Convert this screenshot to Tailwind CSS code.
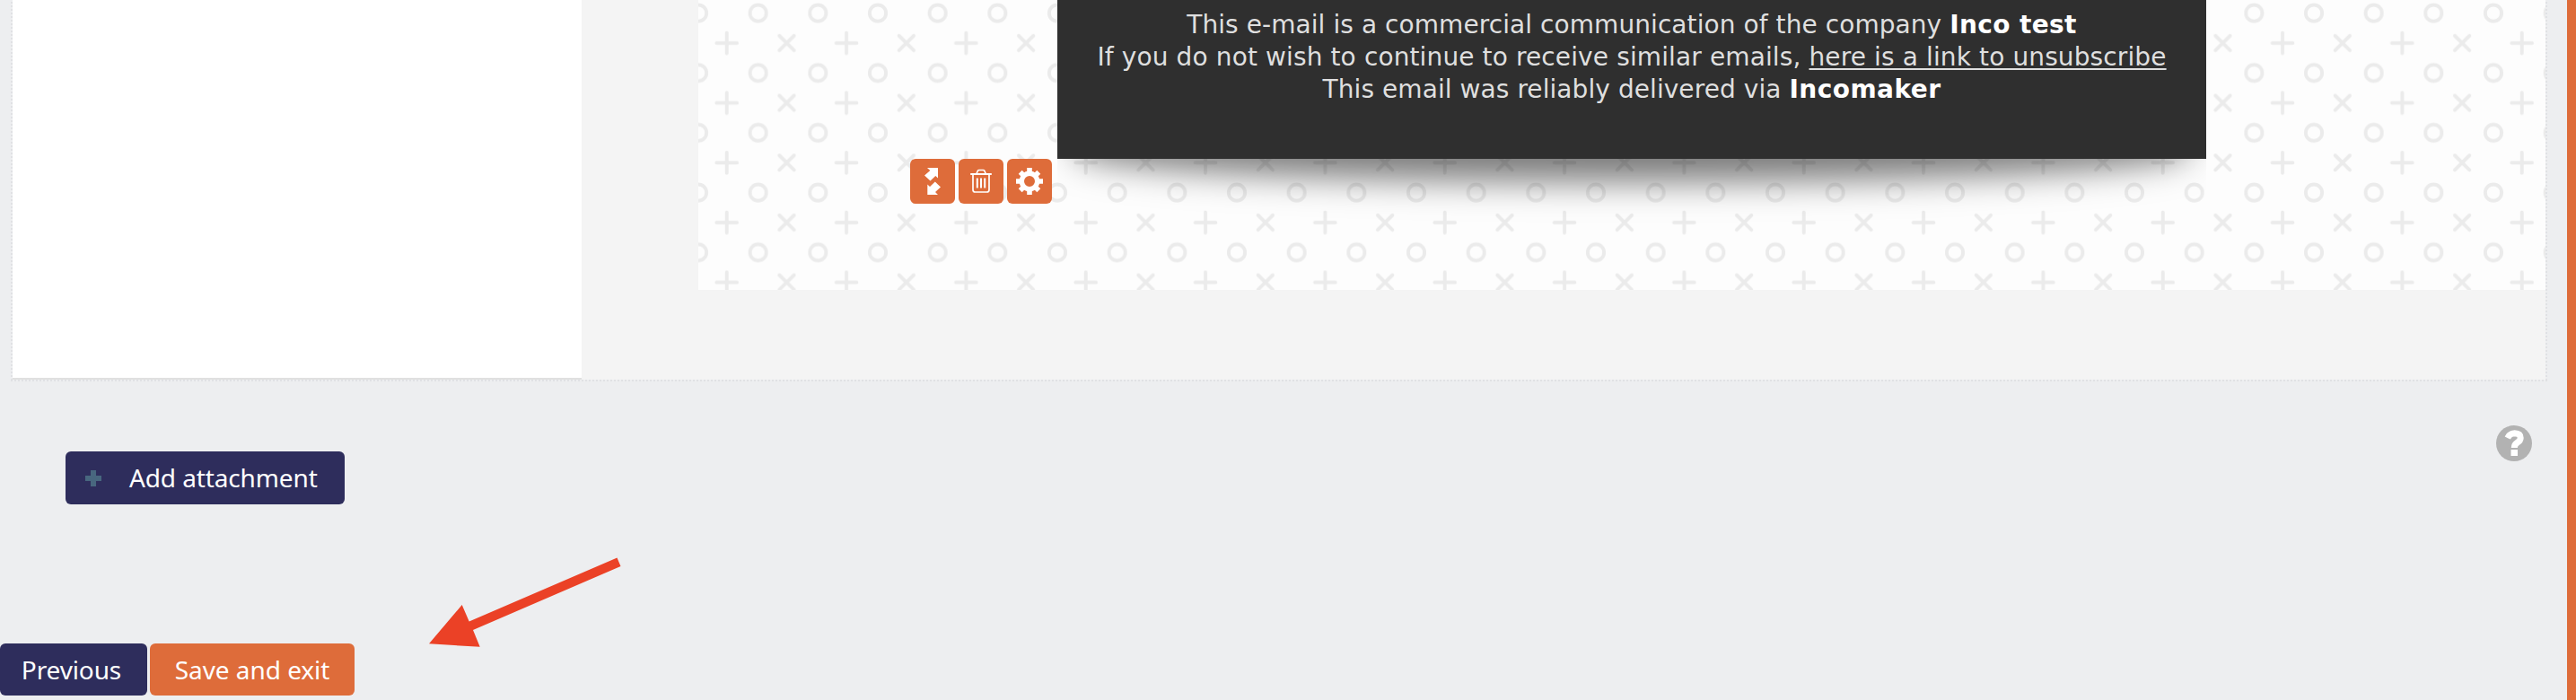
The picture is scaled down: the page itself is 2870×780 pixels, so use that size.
<!DOCTYPE html>
<html lang="en">
<head>
  <meta charset="UTF-8" />
  <title>Email editor</title>
  <script src="https://cdn.jsdelivr.net/npm/@tailwindcss/browser@4"></script>
</head>
<body class="bg-[#edeef0] font-['Noto_Sans','Open_Sans',sans-serif] text-[28px] overflow-hidden">

  <div class="flex w-[2870px] h-[780px]">
    <div class="relative w-[2860px] flex flex-col">

      <!-- Editor -->
      <div class="w-[2826px] ml-3">
        <div class="flex h-[423px]">
          <div class="w-[2px] bg-[repeating-linear-gradient(to_bottom,transparent_0_2px,#e0e1e4_2px_4px)]"></div>

          <!-- Settings panel -->
          <aside class="w-[634px] h-[423px] bg-white border-b-2 border-[#e0e0e0]"></aside>

          <!-- Canvas -->
          <main class="w-[2188px] bg-[#f4f4f4] pl-[130px]">
            <div class="relative w-[2058px] h-[323px] bg-[#fdfdfd] overflow-hidden">
              <svg class="absolute inset-0" width="2058" height="323">
                <defs>
                  <pattern id="shapes" width="133.333" height="66.667" patternUnits="userSpaceOnUse">
                    <g fill="none" stroke="#ebebeb" stroke-width="3.9" stroke-linecap="round">
                      <circle cx="0" cy="14.6" r="9.1" />
                      <circle cx="66.667" cy="14.6" r="9.1" />
                      <circle cx="133.333" cy="14.6" r="9.1" />
                      <path d="M20.300 48h22.800M31.7 36.600v22.800M90.300 39.800l16.400 16.400M106.700 39.800l-16.400 16.400" />
                    </g>
                  </pattern>
                </defs>
                <rect width="2058" height="323" fill="url(#shapes)" />
              </svg>

              <div class="relative flex pl-[236px]">
                <!-- Block tools -->
                <div class="flex gap-1 pt-[177px] w-[164px]">
                  <button class="size-[50px] rounded-[6px] bg-[#de6c3a] flex items-center justify-center">
                    <svg width="50" height="50" fill="#fff">
                      <path d="M19 10H31V21.500L28.300 19L22.500 24.500L16 18.500L22.300 13ZM19.300 40V28.500L22 31L27.800 25.500L34 31.500L28 37L31 40Z" />
                    </svg>
                  </button>
                  <button class="size-[50px] rounded-[6px] bg-[#de6c3a] flex items-center justify-center">
                    <svg width="50" height="50" fill="none" stroke="#fff" stroke-width="1.7">
                      <path d="M13.200 17h23.600" stroke-width="2" />
                      <path d="M20 16.500l1.300-3q.500-1 1.500-1h4.600q1 0 1.500 1l1.300 3" />
                      <path d="M16 17.500v17q0 2.500 2.500 2.500h13q2.500 0 2.500-2.500v-17" />
                      <path d="M20.800 21.500v11M25 21.500v11M29.200 21.500v11" stroke-width="2" />
                    </svg>
                  </button>
                  <button class="size-[50px] rounded-[6px] bg-[#de6c3a] flex items-center justify-center">
                    <svg width="50" height="50" fill="none" stroke="#fff">
                      <circle cx="25" cy="25" r="8.700" stroke-width="5.400" />
                      <g stroke-width="5.600">
                        <path d="M25 10v5M25 35v5M10 25h5M35 25h5M14.700 14.700l3.500 3.500M31.800 31.800l3.500 3.500M35.300 14.700l-3.500 3.500M18.200 31.800l-3.500 3.500" />
                      </g>
                    </svg>
                  </button>
                </div>

                <!-- Email footer -->
                <div class="w-[1280px]">
                  <div class="h-[177px] pt-[10px] bg-[#2f2f2f] text-[#dfdfdf] text-center leading-9 tracking-[0.07px] font-['DejaVu_Sans',Verdana,sans-serif]">
                    <p>This e-mail is a commercial communication of the company <b class="text-white tracking-[0.35px]">Inco test</b></p>
                    <p class="tracking-[0.12px]">If you do not wish to continue to receive similar emails, <a class="underline decoration-2 underline-offset-[3px]">here is a link to unsubscribe</a></p>
                    <p>This email was reliably delivered via <b class="text-white tracking-[0.45px]">Incomaker</b></p>
                  </div>
                  <div class="h-[100px] overflow-hidden">
                    <div class="-mt-[200px] mx-5 h-[200px] rounded-[50%/34px] shadow-[0_25px_38px_rgba(0,0,0,0.52)]"></div>
                  </div>
                </div>
              </div>
            </div>
          </main>

          <div class="w-[2px] bg-[repeating-linear-gradient(to_bottom,transparent_0_2px,#e0e1e4_2px_4px)]"></div>
        </div>
        <div class="h-[2px] bg-[repeating-linear-gradient(to_right,#e0e1e4_0_2px,transparent_2px_4px)]"></div>
      </div>

      <!-- Attachments -->
      <div class="flex justify-between pl-[73px] pr-[39px] pt-[49px]">
        <button class="mt-[29px] w-[311px] h-[59px] rounded-[6px] bg-[#2e2d5c] text-white flex items-center pl-[22px]">
          <svg class="mr-[31px]" width="18" height="18" fill="#48677f">
            <path d="M6 0h6v6h6v6h-6v6H6v-6H0V6h6z" />
          </svg>
          <span class="pb-[2px] tracking-[-0.12px]">Add attachment</span>
        </button>
        <svg width="40" height="40" fill="none">
          <circle cx="20" cy="20" r="20" fill="#b2b2b2" />
          <path d="M12.800 14Q15.500 8.800 20.500 8.800Q27.200 9 27.200 14Q27.200 17 23.500 19.300Q20.300 21.300 20.300 25" stroke="#fff" stroke-width="7" />
          <path d="M16.500 27h7.500v7h-7.500z" fill="#fff" />
        </svg>
      </div>

      <!-- Bottom buttons -->
      <div class="flex gap-[3px] pt-[155px]">
        <button class="w-[164px] h-[58px] rounded-[6px] bg-[#2e2d5c] text-white pr-[5px] tracking-[-0.12px]">Previous</button>
        <button class="w-[228px] h-[58px] rounded-[6px] bg-[#de6c3a] text-white tracking-[-0.05px]">Save and exit</button>
      </div>

      <!-- Arrow pointing at the save button -->
      <svg class="absolute left-[470px] top-[610px]" width="230" height="120" fill="#eb4126">
        <path d="M8 107.300L44.700 64L52.700 82.500L217.500 11.500L221.500 21L57 92L64.700 110.800z" />
      </svg>
    </div>

    <div class="w-[10px] bg-[#de6c3a]"></div>
  </div>

</body>
</html>
